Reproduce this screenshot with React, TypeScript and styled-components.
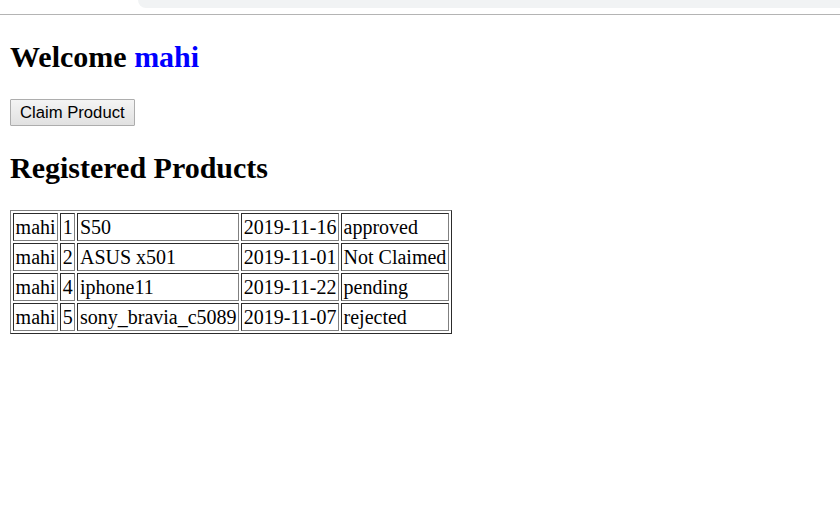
import styled, { createGlobalStyle } from 'styled-components'

const GlobalStyles = createGlobalStyle`
  body {
    margin: 0;
    background: #ffffff;
    font-family: "Liberation Serif", "Times New Roman", serif;
    font-size: 20px;
    color: #000;
  }
`

const BrowserBar = styled.div`
  height: 14px;
  border-bottom: 1px solid #b4b4b4;
  display: flex;
  align-items: flex-start;
`

const AddressPill = styled.div`
  margin-left: 138px;
  flex: 1;
  height: 8px;
  background: #f1f3f4;
  border-bottom-left-radius: 10px;
`

const Page = styled.div`
  padding: 0 10px;
`

const Heading = styled.h2`
  font-size: 30px;
  font-weight: bold;
  margin: 0.83em 0;
  line-height: normal;
`

const Name = styled.span`
  color: #0000ff;
`

const Actions = styled.div`
  display: flex;
`

const Button = styled.button`
  font-family: Arial, "Liberation Sans", sans-serif;
  font-size: 16.67px;
  line-height: 19px;
  padding: 3px 9px;
  border: 1px solid #adadad;
  border-radius: 1px;
  background: linear-gradient(#f4f4f4, #e1e1e1);
  color: #000;
  cursor: pointer;
`

const Table = styled.table`
  border: 1px outset grey;
  border-spacing: 2px;
  border-collapse: separate;
  font-size: 20px;
`

const Cell = styled.td`
  border: 1px inset grey;
  padding: 1px 1.6px;
  line-height: 24px;
  white-space: nowrap;
`

type Product = {
  user: string
  id: number
  name: string
  date: string
  status: string
}

const products: Product[] = [
  { user: 'mahi', id: 1, name: 'S50', date: '2019-11-16', status: 'approved' },
  { user: 'mahi', id: 2, name: 'ASUS x501', date: '2019-11-01', status: 'Not Claimed' },
  { user: 'mahi', id: 4, name: 'iphone11', date: '2019-11-22', status: 'pending' },
  { user: 'mahi', id: 5, name: 'sony_bravia_c5089', date: '2019-11-07', status: 'rejected' },
]

export default function App() {
  return (
    <>
      <GlobalStyles />
      <BrowserBar>
        <AddressPill />
      </BrowserBar>
      <Page>
        <Heading>
          Welcome <Name>mahi</Name>
        </Heading>
        <Actions>
          <Button>Claim Product</Button>
        </Actions>
        <Heading>Registered Products</Heading>
        <Table>
          <tbody>
            {products.map((p) => (
              <tr key={p.id}>
                <Cell>{p.user}</Cell>
                <Cell>{p.id}</Cell>
                <Cell>{p.name}</Cell>
                <Cell>{p.date}</Cell>
                <Cell>{p.status}</Cell>
              </tr>
            ))}
          </tbody>
        </Table>
      </Page>
    </>
  )
}
